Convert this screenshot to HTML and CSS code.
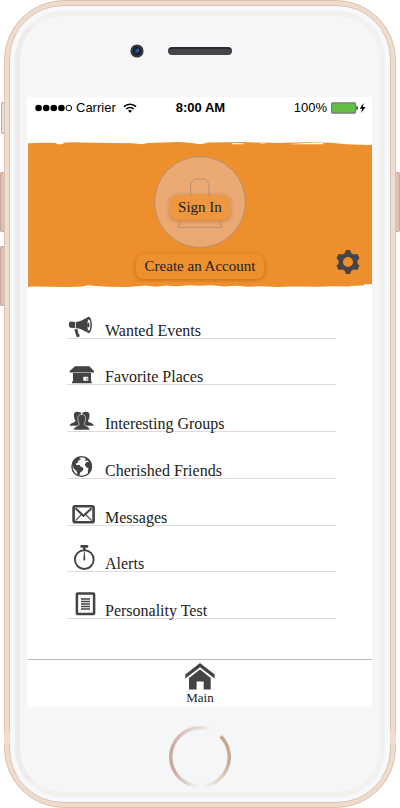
FILE: index.html
```html
<!DOCTYPE html>
<html lang="en">
<head>
<meta charset="utf-8">
<meta name="viewport" content="width=device-width, initial-scale=1">
<title>Main menu</title>
<link rel="stylesheet" href="styles.css">
</head>
<body>
<div class="phone">
  <span class="side-key mute"></span>
  <span class="side-key volume-up"></span>
  <span class="side-key volume-down"></span>
  <span class="side-key power"></span>
  <div class="rim">
    <span class="band band-left"></span>
    <span class="band band-right"></span>
    <div class="shell">
      <div class="face">
        <div class="earpiece">
          <svg class="camera" viewBox="0 0 14 14" aria-hidden="true">
            <circle cx="7" cy="7" r="6.6" fill="#38393d"/>
            <circle cx="7" cy="7" r="4.2" fill="#15171f"/>
            <circle cx="7" cy="7" r="2.9" fill="#1d3266"/>
            <ellipse cx="7.6" cy="6.4" rx="1.8" ry="1.1" transform="rotate(-50 7.6 6.4)" fill="#3c66ad"/>
          </svg>
          <span class="speaker"></span>
        </div>

        <main class="screen">
          <header class="status">
            <div class="status-left">
              <svg width="38" height="8" viewBox="0 0 38 8" aria-hidden="true">
                <circle cx="3.6" cy="4" r="3.3"/><circle cx="11.2" cy="4" r="3.3"/>
                <circle cx="18.8" cy="4" r="3.3"/><circle cx="26.4" cy="4" r="3.3"/>
                <circle cx="33.8" cy="4" r="2.8" fill="none" stroke="#000"/>
              </svg>
              <span>Carrier</span>
              <svg class="wifi" width="14" height="10" viewBox="0 0 14 10" fill="none" stroke="#000" stroke-width="1.7" aria-hidden="true">
                <path d="M1 3.7C4.400 .4 9.600 .4 13 3.700"/>
                <path d="M3.300 6C5.400 4 8.600 4 10.700 6"/>
                <path d="M7 9.800 4.900 7.700C6.100 6.700 7.900 6.700 9.100 7.700Z" fill="#000" stroke="none"/>
              </svg>
            </div>
            <strong>8:00 AM</strong>
            <div class="status-right">
              <span>100%</span>
              <svg width="35" height="12" viewBox="0 0 35 12" aria-hidden="true">
                <rect x=".6" y=".9" width="24" height="10.200" rx="1" fill="#66bd43" stroke="#77747a" stroke-width="1.100"/>
                <path d="M25.500 4C27.300 4.400 27.300 7.600 25.500 8Z"/>
                <path d="M32.600 1 28.800 6.800H31.200L30 11 34.600 5H32Z"/>
              </svg>
            </div>
          </header>

          <section class="banner">
            <svg class="edge" viewBox="0 0 344 6" preserveAspectRatio="none" aria-hidden="true">
              <path fill="#ee8f2d" d="M0 6V1.300L18 .8 28 1 30 2H34L37 .4 48 .2 52 .6 80 1 104 1.300 114 2.200 120 1 136 .6 150 .1 158 .5 164 1 172 1.300 180 .6 200 .2 214 0 230 .5 250 .9 276 .3 300 .8 316 1.200 344 2.500V6Z"/>
              <path fill="#fff" d="M28 .800 36 .800 33 2.200H29ZM115 2.200 125 1 119 1.800ZM164 1 181 .8 172 2.200ZM204 1 216 1.200 215 2.200H204ZM232 1.400H237V2.100H232ZM262 2.100 278 1H295V2.200H263ZM300 .6 320 .7 343 1V3L318 2.200 311 1.500Z"/>
            </svg>
            <div class="banner-body">
              <div class="account">
                <svg class="avatar" viewBox="0 0 92 92" fill="none" stroke="#b68f70" aria-hidden="true">
                  <circle cx="46" cy="46" r="45.400" fill="#ebaa74"/>
                  <path d="M36.700 38V30.500C36.700 25.500 40 23 43 23H48.500C52 23 55 26.200 55 30.500V38C55 48 50.500 54 46 54S36.700 48 36.700 38Z"/>
                  <path d="M24.500 71.400C24.500 65 29 60 40 57 44 60 48 60 52 57 63 60 67.500 65 67.500 71.400Z"/>
                </svg>
                <button class="pill sign-in" type="button">Sign In</button>
              </div>
              <button class="pill" type="button">Create an Account</button>
            </div>
            <button class="settings" type="button" aria-label="Settings">
              <svg viewBox="0 0 24 26" aria-hidden="true">
                <path fill="#454545" fill-rule="evenodd" d="M10 1H14L15.300 4.200 17.800 5.600 21.300 5.100 23.500 9 21.400 11.700V14.300L23.500 17 21.300 20.900 17.800 20.400 15.300 21.800 14 25H10L8.700 21.800 6.200 20.400 2.700 20.900.5 17 2.600 14.300V11.700L.5 9 2.700 5.100 6.200 5.600 8.700 4.200ZM12 8A5 5 0 1 0 12 18A5 5 0 1 0 12 8Z"/>
              </svg>
            </button>
            <svg class="edge" viewBox="0 0 344 6" preserveAspectRatio="none" aria-hidden="true">
              <path fill="#ee8f2d" d="M0 0H344V2.200H336V3.600L326 3.800 320 4.500 306 4.200 290 4.800 262 4.400 250 5 232 4.300 220 4.700 208 3.800 196 4.400 184 3.200 170 3.800 162 3.200 148 4.200 138 3.500 128 4.800 118 3.500 100 5 80 4.700 68 4 60 3.300 54 4.500 40 4.900 20 4.800 3 4.600 0 5.200Z"/>
            </svg>
          </section>

          <nav class="menu" aria-label="Menu">
            <a href="#events">
              <svg viewBox="0 0 32 32" aria-hidden="true">
                <path d="M3.500 15.600 8 16V22.100L3.500 21.700C1.300 21 1.300 16.400 3.500 15.600ZM8.800 16C13 15.800 16.300 14.200 19.500 11.600V26.500C16.300 23.800 13 22.300 8.800 22.200ZM7.300 23.400 10.300 23.100 11.200 25.500 10.800 26.200 13 30.300 9.800 31.200Z"/>
                <ellipse cx="21.600" cy="19" rx="3.300" ry="8.300"/>
                <ellipse cx="21.900" cy="19" rx="1.500" ry="5.600" fill="#fff"/>
                <ellipse cx="21.300" cy="19" rx="1.200" ry="2.600"/>
              </svg>
              <span>Wanted Events</span>
            </a>
            <a href="#places">
              <svg viewBox="0 0 32 32" aria-hidden="true">
                <path d="M8 14.200H22.400L27 19V20.500H2.700V19ZM6 21H24V29.400H24.800V31.300H5V29.400H6Z"/>
                <path fill="#fff" d="M16.300 24.800H21.200V28.700H16.300Z"/>
                <path d="M19.300 26.300H20.500V27.800H19.300Z"/>
              </svg>
              <span>Favorite Places</span>
            </a>
            <a href="#groups">
              <svg viewBox="0 0 32 32" aria-hidden="true">
                <path d="M10.700 12.700C7.500 12.400 6.300 14.500 7 17.700 7.300 20 8.200 20.700 8.500 22.200 7 24 3 23.700 2.700 26.700H14.700L14 13.500ZM18.700 12.700C21.900 12.400 23.100 14.500 22.400 17.700 22.100 20 21.200 20.700 20.900 22.200 22.400 24 26.400 23.700 26.700 26.700H14.700L15.400 13.500Z"/>
                <path stroke="#fff" stroke-width=".6" d="M14.700 15.300C11.600 15.300 10.400 17.600 10.800 20.500 11.100 22.800 12.100 23.600 12.300 25.500 11 27.500 6.800 27.200 6.500 31H22.900C22.600 27.200 18.400 27.500 17.100 25.500 17.300 23.600 18.300 22.800 18.600 20.500 19 17.600 17.800 15.300 14.700 15.300Z"/>
              </svg>
              <span>Interesting Groups</span>
            </a>
            <a href="#friends">
              <svg viewBox="0 0 32 32" aria-hidden="true">
                <circle cx="14.700" cy="20.500" r="9.800" fill="#fff" stroke="#434343" stroke-width="1.300"/>
                <path d="M6 15.500C8 12 11 10.800 14 10.700L12.400 12.200 14 13.200 11.500 14.600 10.500 17 8.500 17.700 9.400 19 12.500 19 14 20.800 16.500 22 15.800 24.700 13.300 26.300 12.300 29.500 10.600 29.300 9.500 24.700 7 23 5.500 20ZM17 11C20 11.200 23.500 14 24.500 17.500 25.500 21.500 24.300 25.500 21.300 28L20.800 24.500 21.500 22.300 19.300 21.300 17.800 18.700 19.300 16.300 22 15.500 20.500 14.500 18.300 14.900 18.600 13Z"/>
              </svg>
              <span>Cherished Friends</span>
            </a>
            <a href="#messages">
              <svg viewBox="0 0 32 32" aria-hidden="true">
                <rect x="6.600" y="13.300" width="20" height="15.900" rx="1.500" fill="#fff" stroke="#434343" stroke-width="2.600"/>
                <path fill="none" stroke="#434343" stroke-width="1.200" d="M8.500 27.700 14.300 21.600M24.600 27.700 18.800 21.600"/>
                <path fill="none" stroke="#434343" stroke-width="2" d="M8.500 15.300 16.500 22.800 24.600 15.300"/>
              </svg>
              <span>Messages</span>
            </a>
            <a href="#alerts">
              <svg viewBox="0 0 32 32" aria-hidden="true">
                <circle cx="17.300" cy="20.600" r="9.400" fill="none" stroke="#434343" stroke-width="1.900"/>
                <rect x="13.300" y="6" width="8" height="2.800" rx="1"/>
                <path d="M16.100 8H18.500V11.500H16.100ZM17 13H17.700L18.300 20.500 17.300 22 16.300 20.500Z"/>
              </svg>
              <span>Alerts</span>
            </a>
            <a href="#test">
              <svg viewBox="0 0 32 32" aria-hidden="true">
                <rect x="9.900" y="7.600" width="17.200" height="20.300" rx=".6" fill="#fff" stroke="#434343" stroke-width="2.500"/>
                <path stroke="#434343" stroke-width="1.300" d="M14 13H23M14 15.500H23M14 18H23M14 20.500H23M14 23H23"/>
              </svg>
              <span>Personality Test</span>
            </a>
          </nav>

          <footer class="tabbar">
            <a href="#main">
              <svg viewBox="0 0 30 27" aria-hidden="true">
                <path d="M15 0 29.700 11.500V15.500L15 4.200.3 15.500V11.500ZM15 6.600 25.700 15V26.500H18.700V18.500H11.600V26.500H4V15Z"/>
              </svg>
              <span>Main</span>
            </a>
          </footer>
        </main>

        <div class="chin"><button class="home" type="button" aria-label="Home"></button></div>
      </div>
    </div>
  </div>
</div>
</body>
</html>
```

FILE: styles.css
```css
* { box-sizing: border-box; }

body {
  margin: 0;
  background: #fff;
  color: #222;
  font-family: "Liberation Serif", serif;
}

a { color: inherit; text-decoration: none; }
button { border: 0; padding: 0; background: none; font: inherit; color: inherit; }
svg { display: block; flex: none; }

/* Device */
.phone {
  position: relative;
  display: flex;
  min-height: 100vh;
  padding: 0 4px;
}
.rim {
  position: relative;
  flex: 1;
  display: flex;
  padding: 4px;
  border: 1px solid #d9c5b7;
  border-radius: 60px;
  background: #f1dbca;
}
.shell {
  flex: 1;
  display: flex;
  padding: 5px;
  border: 1px solid #d6c3b8;
  border-radius: 54px;
  background: #f6f8fb;
}
.face {
  flex: 1;
  display: flex;
  flex-direction: column;
  border: 5px solid #f1f1ee;
  border-left-color: #efebea;
  border-radius: 48px;
  background: #f4f6f8;
}
.side-key {
  position: absolute;
  left: 0;
  width: 4px;
  height: 60px;
  border: 1px solid #c4a999;
  border-right: 0;
  border-radius: 2px 0 0 2px;
  background: #dcc2b2;
}
.mute { top: 102px; left: 1px; width: 3px; height: 32px; background: #efdacb; }
.volume-up { top: 172px; }
.volume-down { top: 246px; }
.power {
  top: 172px;
  left: auto;
  right: 0;
  border: 1px solid #c4a999;
  border-left: 0;
  border-radius: 0 2px 2px 0;
}
.band {
  position: absolute;
  bottom: 64px;
  width: 6px;
  height: 12px;
  background: #f3dccb;
}
.band-left { left: -1px; }
.band-right { right: -1px; }

.earpiece {
  display: grid;
  grid-template-columns: 1fr auto 1fr;
  gap: 24px;
  align-items: center;
  height: 81px;
  padding-bottom: 12px;
}
.camera { width: 14px; height: 14px; justify-self: end; }
.speaker {
  width: 64px;
  height: 8px;
  border-radius: 4px;
  background: #45464a;
  border-top: 2px solid #2b2c2f;
}
.chin {
  display: flex;
  justify-content: center;
  align-items: center;
  height: 85px;
  padding-top: 14px;
}
.home {
  width: 62px;
  height: 62px;
  border-radius: 50%;
  background:
    radial-gradient(circle, #f4f6f8 27px, transparent 28px),
    conic-gradient(#e8dcd8, #f4f6f8 20deg, #f4f6f8 44deg, #c5a48c 46deg, #c9aa92 100deg, #f4f6f8 172deg, #f4f6f8 182deg, #cbaa9e 240deg, #cbaa9e 290deg, #e8dcd8);
}

/* Screen */
.screen {
  flex: 1;
  display: flex;
  flex-direction: column;
  margin: 0 8px 0 7px;
  background: #fff;
}
.status {
  display: grid;
  grid-template-columns: 1fr auto 1fr;
  align-items: center;
  height: 45px;
  padding: 0 6px 24px 8px;
  color: #000;
  font: 13px/20px "Liberation Sans", sans-serif;
}
.status-left, .status-right { display: flex; align-items: center; gap: 3px; }
.status-left .wifi { margin-left: 4px; }
.status-right { justify-content: flex-end; gap: 4px; }

.banner { position: relative; margin-left: 1px; }
.edge { width: 100%; height: 6px; }
.banner-body {
  display: flex;
  flex-direction: column;
  align-items: center;
  gap: 6px;
  padding: 8px 0 3px;
  background: #ee8f2d;
}
.account { display: grid; justify-items: center; }
.account > * { grid-area: 1 / 1; }
.avatar { width: 92px; height: 92px; }
.pill {
  height: 25px;
  padding: 0 9px;
  border-radius: 8px;
  background: #ef902f;
  box-shadow: 0 1px 5px rgba(160, 80, 10, .5);
  font-size: 15px;
  line-height: 25px;
}
.sign-in {
  align-self: end;
  margin-bottom: 28px;
  padding: 0 8px;
  background: rgba(240, 146, 54, .84);
}
.settings { position: absolute; right: 12px; bottom: 13px; }
.settings svg { width: 24px; height: 26px; }

.menu {
  flex: 1;
  display: grid;
  grid-auto-rows: 1fr;
  margin: 4px 36px 40px 40px;
  font-size: 16px;
  line-height: 14px;
}
.menu a {
  display: flex;
  align-items: flex-end;
  gap: 6px;
  border-bottom: 1px solid #e4dade;
}
.menu svg { width: 32px; height: 32px; fill: #434343; }

.tabbar {
  display: flex;
  justify-content: center;
  height: 48px;
  margin-left: 1px;
  padding-top: 3px;
  border-top: 1px solid #bcbabc;
}
.tabbar a {
  display: flex;
  flex-direction: column;
  align-items: center;
  font-size: 13px;
  line-height: 16px;
}
.tabbar svg { width: 30px; height: 27px; fill: #434343; }
```
